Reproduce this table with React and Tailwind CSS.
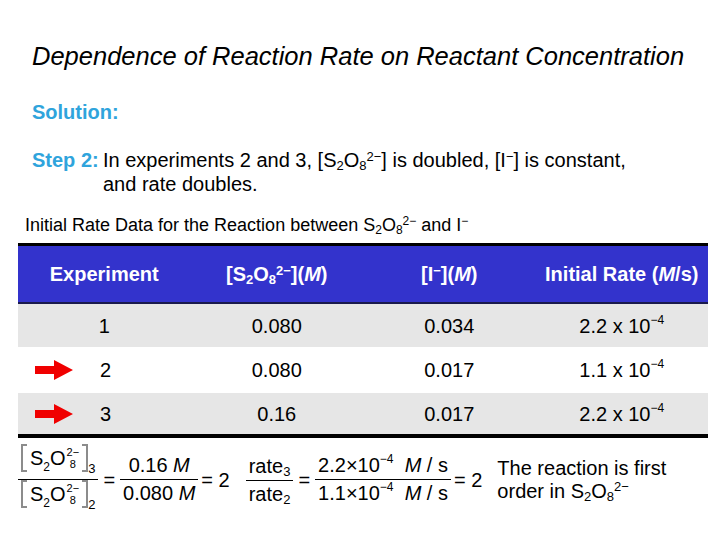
import React from "react";

function Chem() {
  return (
    <>
      S<sub className="text-[13px]">2</sub>O<sub className="text-[13px]">8</sub>
      <sup className="text-[13px]">2−</sup>
    </>
  );
}

function Arrow() {
  return (
    <svg width="38" height="20" viewBox="0 0 38 20" className="shrink-0">
      <path d="M0 6 H19 V0 L38 10 L19 20 V14 H0 Z" fill="#f00000" />
    </svg>
  );
}

function Frac({ top, bottom }) {
  return (
    <span className="inline-flex flex-col items-center">
      <span className="px-[3px] leading-[27px]">{top}</span>
      <span className="self-stretch border-t border-black" />
      <span className="px-[3px] leading-[27px]">{bottom}</span>
    </span>
  );
}

function BrChem({ idx }) {
  return (
    <span className="inline-flex items-end">
      <span className="inline-flex items-center h-[28px]">
        <span className="w-[6px] h-[28px] border-l-2 border-t-2 border-b-2 border-[#8c8c8c]" />
        <span className="pl-[3px] inline-flex items-center">
          <span>S</span>
          <span className="text-[12px] leading-none self-end -mb-[1px]">2</span>
          <span>O</span>
          <span className="inline-flex flex-col items-center text-[11px] leading-[10px] ml-[1px] gap-[2px]">
            <span>2−</span>
            <span>8</span>
          </span>
        </span>
        <span className="w-[6px] h-[28px] border-r-2 border-t-2 border-b-2 border-[#8c8c8c] ml-[3px]" />
      </span>
      <span className="text-[13px] leading-none -mb-[3px]">{idx}</span>
    </span>
  );
}

function TenNeg() {
  return (
    <>
      10<sup className="text-[12px] -top-[0.75em]">−4</sup>
    </>
  );
}

export default function App() {
  const cols = "grid grid-cols-4 items-center text-center";
  return (
    <div className="w-[720px] h-[540px] bg-white text-black font-['Liberation_Sans',Arial,sans-serif] overflow-hidden">
      <div className="pt-[41px] pl-[32px]">
        <h1 className="text-[25.5px] italic leading-[30px]">
          Dependence of Reaction Rate on Reactant Concentration
        </h1>
        <p className="mt-[29px] text-[20px] leading-[24px] font-bold text-[#2fa4dc]">Solution:</p>
        <div className="mt-[24px] flex text-[20px] leading-[24px]">
          <span className="font-bold text-[#2fa4dc] w-[71px] shrink-0">Step 2:</span>
          <span>
            In experiments 2 and 3, [<Chem />] is doubled, [I<sup className="text-[13px]">−</sup>] is constant,
            <br />
            and rate doubles.
          </span>
        </div>
      </div>
      <p className="mt-[17px] pl-[25px] text-[18px] leading-[24px]">
        Initial Rate Data for the Reaction between S<sub className="text-[12px]">2</sub>O
        <sub className="text-[12px]">8</sub>
        <sup className="text-[12px]">2−</sup> and I<sup className="text-[12px]">−</sup>
      </p>

      <div className="mt-[6px] ml-[18px] w-[690px] text-[20px]">
        <div className={`${cols} h-[61px] bg-[#3333cc] border-t-[3px] border-b-2 border-t-black border-b-[#1a1a4d] text-white font-bold`}>
          <span>Experiment</span>
          <span>
            [<Chem />](<i>M</i>)
          </span>
          <span>
            [I<sup className="text-[13px]">−</sup>](<i>M</i>)
          </span>
          <span>
            Initial Rate (<i>M</i>/s)
          </span>
        </div>
        <div className={`${cols} h-[43px] bg-[#e6e6e6]`}>
          <span>1</span>
          <span>0.080</span>
          <span>0.034</span>
          <span>
            2.2 x <TenNeg />
          </span>
        </div>
        <div className={`${cols} h-[46px] bg-white`}>
          <span className="flex items-center pl-[17px]">
            <Arrow />
            <span className="ml-[27px]">2</span>
          </span>
          <span>0.080</span>
          <span>0.017</span>
          <span>
            1.1 x <TenNeg />
          </span>
        </div>
        <div className={`${cols} h-[45px] bg-[#e6e6e6] border-b-4 border-black`}>
          <span className="flex items-center pl-[17px]">
            <Arrow />
            <span className="ml-[27px]">3</span>
          </span>
          <span>0.16</span>
          <span>0.017</span>
          <span>
            2.2 x <TenNeg />
          </span>
        </div>
      </div>

      <div className="mt-[6px] ml-[18px] flex items-center text-[20px]">
        <Frac top={<BrChem idx="3" />} bottom={<BrChem idx="2" />} />
        <span className="mx-[5px]">=</span>
        <Frac
          top={
            <>
              0.16 <i>M</i>
            </>
          }
          bottom={
            <>
              0.080 <i>M</i>
            </>
          }
        />
        <span className="ml-[3px]">= 2</span>
        <span className="ml-[16px]">
          <Frac
            top={
              <>
                rate<sub className="text-[13px]">3</sub>
              </>
            }
            bottom={
              <>
                rate<sub className="text-[13px]">2</sub>
              </>
            }
          />
        </span>
        <span className="mx-[5px]">=</span>
        <Frac
          top={
            <>
              2.2×<TenNeg />
              &nbsp;&nbsp;<i>M</i> / s
            </>
          }
          bottom={
            <>
              1.1×<TenNeg />
              &nbsp;&nbsp;<i>M</i> / s
            </>
          }
        />
        <span className="ml-[3px]">= 2</span>
        <span className="ml-[15px] text-[20px] leading-[23px]">
          The reaction is first
          <br />
          order in <Chem />
        </span>
      </div>
    </div>
  );
}
